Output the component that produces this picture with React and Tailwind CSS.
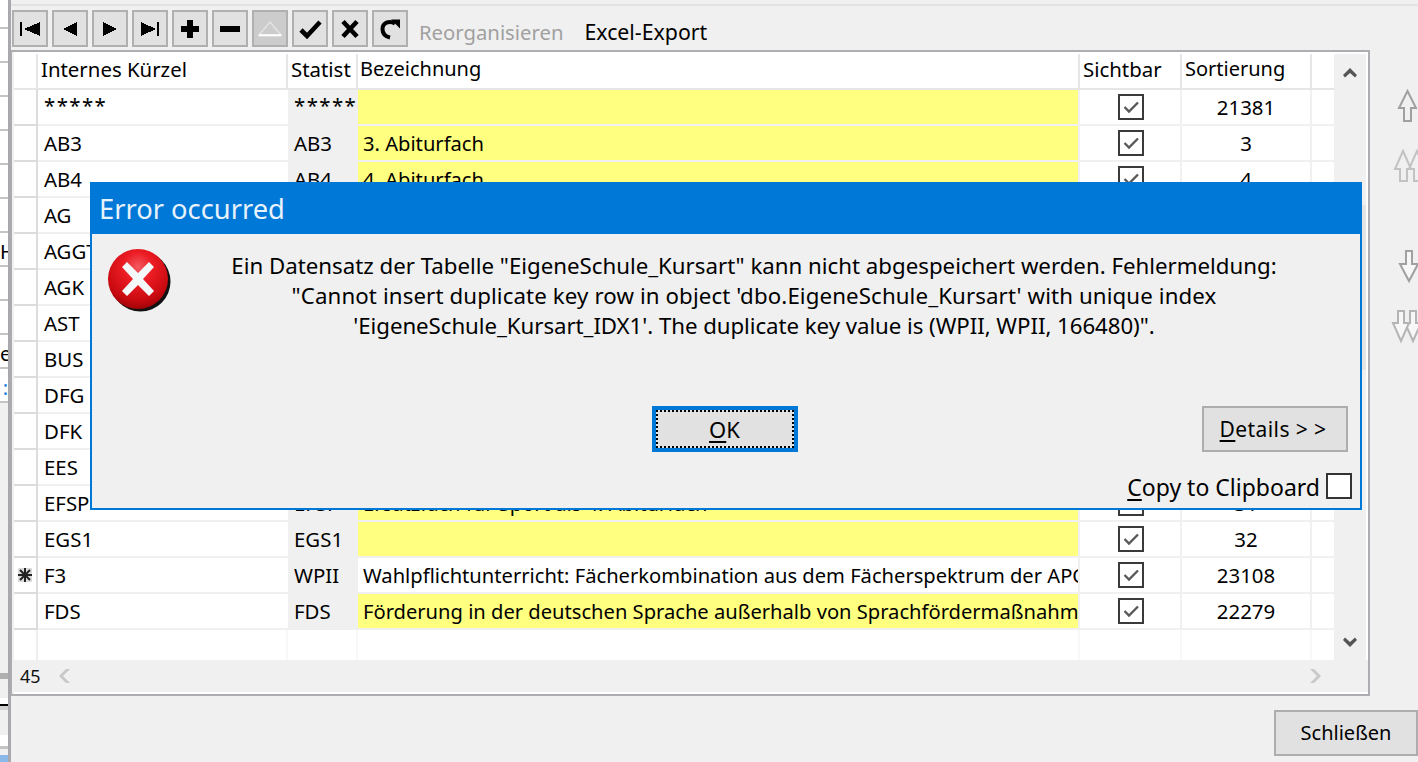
import React from "react";

const FONT = "font-['Noto_Sans','Liberation_Sans',sans-serif]";

const rows = [
  ["", "*****", "*****", "", true, "21381", true],
  ["", "AB3", "AB3", "3. Abiturfach", true, "3", true],
  ["", "AB4", "AB4", "4. Abiturfach", true, "4", true],
  ["", "AG", "AG", "", true, "5", true],
  ["", "AGGT", "AGGT", "", true, "6", true],
  ["", "AGK", "AGK", "", true, "7", true],
  ["", "AST", "AST", "", true, "8", true],
  ["", "BUS", "BUS", "", true, "9", true],
  ["", "DFG", "DFG", "", true, "10", true],
  ["", "DFK", "DFK", "", true, "11", true],
  ["", "EES", "EES", "", true, "12", true],
  ["", "EFSP", "EFSP", "Ersatzfach für Sport als 4. Abiturfach", true, "31", true],
  ["", "EGS1", "EGS1", "", true, "32", true],
  ["*", "F3", "WPII", "Wahlpflichtunterricht: Fächerkombination aus dem Fächerspektrum der APO-GOSt", true, "23108", false],
  ["", "FDS", "FDS", "Förderung in der deutschen Sprache außerhalb von Sprachfördermaßnahmen", true, "22279", true],
];

function Glyph({ children, w = 24, h = 24 }) {
  return (
    <svg width={w} height={h} viewBox={`0 0 ${w} ${h}`} shapeRendering="crispEdges">
      {children}
    </svg>
  );
}

const tools = [
  <Glyph key="a"><path d="M2 5h2v14H2zM22 5v14L6 12z" fill="#000" /></Glyph>,
  <Glyph key="b"><path d="M19 5v14L5 12z" fill="#000" /></Glyph>,
  <Glyph key="c"><path d="M5 5v14l14-7z" fill="#000" /></Glyph>,
  <Glyph key="d"><path d="M3 5v14l15-7zM19 5h2v14h-2z" fill="#000" /></Glyph>,
  <Glyph key="e"><path d="M9 3h6v6h6v6h-6v6H9v-6H3V9h6z" fill="#000" /></Glyph>,
  <Glyph key="f"><path d="M2 9h20v6H2z" fill="#000" /></Glyph>,
  <svg key="g" width="26" height="20" viewBox="0 0 26 20"><path d="M13 3L24 16H2z" fill="none" stroke="#e4e4e4" strokeWidth="1.4" /><path d="M2 16.300h22" stroke="#fff" strokeWidth="2" /></svg>,
  <svg key="h" width="24" height="24" viewBox="0 0 24 24"><path d="M3 13l6 6L22 5" fill="none" stroke="#000" strokeWidth="4.600" /></svg>,
  <svg key="i" width="24" height="24" viewBox="0 0 24 24"><path d="M5 4.500l14 15M19 4.500l-14 15" fill="none" stroke="#000" strokeWidth="4.600" /></svg>,
  <svg key="j" width="24" height="26" viewBox="0 0 24 26"><path d="M17 7.500C11 4 4.500 7 4.500 13c0 4.500 3 7.500 7.500 8.500" fill="none" stroke="#000" strokeWidth="4" /><path d="M13 3.500h9v9z" fill="#000" /></svg>,
];

function ToolButton({ children, active }) {
  return (
    <div className={`flex h-[37px] w-9 items-center justify-center border-2 border-[#b0b0b0] ${active ? "bg-[#cccccc]" : "bg-[#e1e1e1]"}`}>
      {children}
    </div>
  );
}

function Check() {
  return (
    <div className="flex h-[26px] w-[26px] items-center justify-center border-2 border-[#3a3a3a] bg-white">
      <svg width="20" height="20" viewBox="0 0 20 20">
        <path d="M3.500 10l4.500 4.500L17 5.500" fill="none" stroke="#5a5a5a" strokeWidth="2.400" />
      </svg>
    </div>
  );
}

function Row({ r }) {
  const yellow = r[6];
  const stars = r[1] === "*****";
  return (
    <div className="flex h-9 border-b-2 border-[#f0f0f0] text-[20.400px] leading-[34px] text-black">
      <div className="flex h-9 w-[24px] shrink-0 items-center justify-center self-start border-b-2 border-r-2 border-[#dcdcdc]">
        {r[0] && (
          <div className="flex h-[14px] w-[14px] items-center justify-center bg-[#dcdcdc]">
            <svg width="14" height="14" viewBox="0 0 14 14">
              <path d="M7 0v14M0 7h14M2 2l10 10M12 2L2 12" stroke="#222" strokeWidth="2" />
            </svg>
          </div>
        )}
      </div>
      <div className={`w-[250px] shrink-0 overflow-hidden whitespace-nowrap pl-[6px] ${stars ? "tracking-[1.400px] leading-[30px]" : ""}`}>{r[1]}</div>
      <div className={`w-[70px] shrink-0 overflow-hidden whitespace-nowrap bg-[#f0f0f0] pl-[6px] ${stars ? "tracking-[1.400px] leading-[30px]" : ""}`}>{r[2]}</div>
      <div className={`w-[722px] shrink-0 overflow-hidden whitespace-nowrap border-r-2 border-[#f0f0f0] pl-[5px] text-[20.150px] ${yellow ? "bg-[#ffff80]" : "bg-white"}`}>{r[3]}</div>
      <div className="flex w-[102px] shrink-0 items-center justify-center border-r-2 border-[#f0f0f0] pl-[2px]"><Check /></div>
      <div className="w-[130px] shrink-0 border-r-2 border-[#f0f0f0] text-center">{r[5]}</div>
    </div>
  );
}

function Chevron({ d, fill = "#555555" }) {
  return (
    <svg width="16" height="14" viewBox="0 0 16 14">
      <path d={d} fill={fill} />
    </svg>
  );
}

function SideArrow({ paths, color, fill = "none" }) {
  return (
    <svg width="48" height="32" viewBox="0 0 48 32" overflow="visible" className="block">
      {paths.map((d) => (
        <path key={d} d={d} fill={fill} stroke={color} strokeWidth="2" />
      ))}
    </svg>
  );
}

function LeftStrip() {
  const marks = { 7: "H", 10: "e" };
  return (
    <div className="flex w-[8px] shrink-0 flex-col bg-white">
      <div className="h-[29px] border-b-2 border-[#c4c4c4]" />
      {Array.from({ length: 11 }, (_, i) => i + 1).map((i) => (
        <div key={i} className="h-[34px] border-b-2 border-[#c4c4c4] text-[20px] leading-[37px] text-black">
          <span className="block w-[8px] overflow-hidden whitespace-nowrap text-right">
            {marks[i] || (i === 11 ? <span className="text-[#2080e0]">:</span> : "")}
          </span>
        </div>
      ))}
      <div className="h-[270px] bg-[#f0f0f0]" />
      <div className="h-[6px] bg-[#b0b0b0]" />
      <div className="h-[19px] bg-[#f0f0f0]" />
      <div className="h-[6px] bg-white" />
      <div className="h-[2px] bg-black" />
      <div className="h-[4px] bg-[#d0d0d0]" />
      <div className="h-[25px] bg-[#f0f0f0]" />
      <div className="h-[11px] bg-white" />
      <div className="h-[3px] bg-[#c4c4c4]" />
      <div className="h-[6px] bg-[#f0f0f0]" />
      <div className="flex-1 bg-[#8ab8e8]" />
    </div>
  );
}

export default function App() {
  return (
    <div className={`${FONT} relative flex h-[762px] w-[1418px] overflow-hidden bg-[#f0f0f0] text-black`}>
      <LeftStrip />
      <div className="h-full w-[3px] shrink-0 bg-[#a9a9ad]" />
      <div className="flex min-w-0 flex-1 flex-col">
        <div className="mt-1 h-[2px] bg-[#e3e3e3]" />
        <div className="flex h-[44px] items-start gap-1 pl-[1px] pt-1">
          {tools.map((t, i) => (
            <ToolButton key={i} active={i === 6}>{t}</ToolButton>
          ))}
          <span className="ml-[7px] text-[20.300px] leading-[44px] text-[#a0a0a0]">Reorganisieren</span>
          <span className="ml-[17px] text-[21.300px] leading-[44px] text-black">Excel-Export</span>
        </div>
        <div className="flex h-[646px]">
          <div className="flex w-[1359px] flex-col border-y-2 border-r-2 border-l border-[#adadb2] bg-[#f0f0f0] pl-[2px]">
            <div className="flex min-h-0 flex-1 border-t-2 border-white">
              <div className="flex w-[1320px] flex-col bg-white">
                <div className="flex h-[36px] shrink-0 border-b-2 border-[#e6e6e6] text-[20.400px] leading-[30px] text-black">
                  <div className="w-[24px] border-r-2 border-[#e6e6e6]" />
                  <div className="w-[250px] border-r-2 border-[#e6e6e6] pl-[3px]">Internes Kürzel</div>
                  <div className="w-[70px] border-r-2 border-[#e6e6e6] pl-[3px]">Statist</div>
                  <div className="w-[722px] border-r-2 border-[#e6e6e6] pl-[2px] text-[20px]">Bezeichnung</div>
                  <div className="w-[102px] border-r-2 border-[#e6e6e6] pl-[3px]">Sichtbar</div>
                  <div className="w-[130px] border-r-2 border-[#e6e6e6] pl-[3px] text-[20px]">Sortierung</div>
                </div>
                {rows.map((r, i) => (
                  <Row key={i} r={r} />
                ))}
                <div className="flex flex-1 text-[0px]">
                  <div className="w-[24px] border-r-2 border-[#eeeeee]" />
                  <div className="w-[250px] border-r-2 border-[#f8f8f8]" />
                  <div className="w-[70px] border-r-2 border-[#f8f8f8]" />
                  <div className="w-[722px] border-r-2 border-[#f8f8f8]" />
                  <div className="w-[102px] border-r-2 border-[#f8f8f8]" />
                  <div className="w-[130px] border-r-2 border-[#f8f8f8]" />
                </div>
              </div>
              <div className="relative flex flex-1 flex-col items-center justify-between border-r-2 border-white pb-[11px] pt-[12px]">
                <div className="absolute inset-x-0 top-[151px] h-[165px] bg-[#e4e4e4]" />
                <Chevron d="M8 2l7 7-2 2.500-5-4.500-5 4.500L1 9z" />
                <Chevron d="M8 12L1 5l2-2.500L8 7l5-4.500L15 5z" />
              </div>
            </div>
            <div className="flex h-[34px] shrink-0 items-center justify-between border-b-2 border-white pr-[45px] text-[18px]">
              <div className="flex items-center">
                <span className="ml-[6px] text-[#111]">45</span>
                <span className="ml-[16px] flex"><Chevron d="M9 0L2 7l7 7h4L6 7l7-7z" fill="#c8c8c8" /></span>
              </div>
              <Chevron d="M7 0l7 7-7 7H3l7-7-7-7z" fill="#c8c8c8" />
            </div>
          </div>
          <div className="w-[48px] shrink-0 pt-[40px]">
            <SideArrow color="#a0a0a0" paths={["M37.500 1L46 18h-5v13h-7V18h-5z"]} />
            <div className="mt-[28px]">
              <SideArrow color="#c2c2c2" paths={["M33 1l8 18h-4v12h-7V19h-5z", "M47 1l8 18h-4v12h-7V19h-5z"]} />
            </div>
            <div className="mt-[68px]">
              <SideArrow color="#a0a0a0" fill="#f7f7f7" paths={["M36 1h6v13h6L39 31 30 14h6z"]} />
            </div>
            <div className="mt-[28px]">
              <SideArrow color="#b4b4b4" fill="#f7f7f7" paths={["M40 1h6v12h5L43 31 35 13h5z", "M28 1h6v12h5L31 31 23 13h5z"]} />
            </div>
          </div>
        </div>
        <div className="flex flex-1 items-start justify-end pt-[14px]">
          <div className="flex h-[46px] w-[144px] items-center justify-center border-2 border-[#adadad] bg-[#e1e1e1] text-[20px] text-black">
            Schließen
          </div>
        </div>
      </div>

      <div className="absolute left-[90px] top-[182px] flex h-[328px] w-[1272px] flex-col border-2 border-t-0 border-[#0078d7] bg-[#f0f0f0]">
        <div className="-mx-[2px] flex h-[52px] shrink-0 items-center bg-[#0078d7] pl-[9px] pt-[2px] text-[27.300px] text-[#e8f2fb]">
          Error occurred
        </div>
        <div className="flex min-h-0 flex-1 flex-col">
          <div className="flex h-[128px] shrink-0">
            <div className="ml-[15px] mt-[14px] shrink-0">
              <svg width="66" height="66" viewBox="0 0 66 66">
                <defs>
                  <radialGradient id="eg" cx="50%" cy="30%" r="70%">
                    <stop offset="0%" stopColor="#f25a60" />
                    <stop offset="35%" stopColor="#ec1c24" />
                    <stop offset="80%" stopColor="#c80a10" />
                    <stop offset="100%" stopColor="#a00408" />
                  </radialGradient>
                </defs>
                <circle cx="33.500" cy="33.500" r="30" fill="#111" />
                <circle cx="31" cy="31" r="30" fill="url(#eg)" />
                <path d="M15 19l5-5 11 11 11-11 5 5-11 12 11 12-5 5-11-11-11 11-5-5 11-12z" fill="#f4f8f8" />
              </svg>
            </div>
            <div className="ml-[11px] w-[1140px] shrink-0 pt-[17px] text-center text-[22.250px] leading-[30px] text-black">
              <div>Ein Datensatz der Tabelle "EigeneSchule_Kursart" kann nicht abgespeichert werden. Fehlermeldung:</div>
              <div className="tracking-[0.12px]">"Cannot insert duplicate key row in object 'dbo.EigeneSchule_Kursart' with unique index</div>
              <div className="tracking-[-0.05px]">'EigeneSchule_Kursart_IDX1'. The duplicate key value is (WPII, WPII, 166480)".</div>
            </div>
          </div>
          <div className="relative flex h-[90px] shrink-0 items-start justify-center pt-[44px]">
            <div className="ml-[-3px] flex h-[46px] w-[146px] shrink-0 items-center justify-center border-4 border-[#0078d7] bg-[#e1e1e1] text-[22px] outline-2 -outline-offset-[6px] outline-dotted outline-black">
              <span className="underline decoration-2 underline-offset-[3px]">O</span>K
            </div>
            <div className="absolute right-[12px] top-[44px] flex h-[46px] w-[146px] items-center justify-center border-2 border-[#adadad] bg-[#e1e1e1] text-[21px] tracking-[0.4px]">
              <span className="pr-[4px] pt-[1px]"><span className="underline decoration-2 underline-offset-[3px]">D</span>etails &gt; &gt;</span>
            </div>
          </div>
          <div className="mt-auto flex items-center justify-end pb-[8px] pr-[8px] text-[23px] leading-[26px]">
            <span className="pt-[2px]"><span className="underline decoration-2 underline-offset-[3px]">C</span>opy to Clipboard</span>
            <div className="ml-[6px] h-[26px] w-[26px] border-2 border-[#333333] bg-white" />
          </div>
        </div>
      </div>
    </div>
  );
}
